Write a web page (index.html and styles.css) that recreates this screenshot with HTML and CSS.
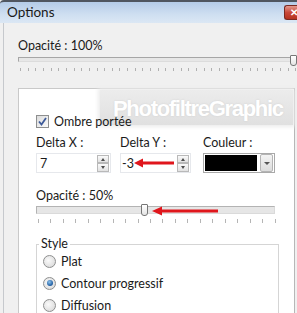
FILE: index.html
```html
<!DOCTYPE html>
<html lang="fr">

<head>
    <meta charset="UTF-8">
    <title>Options</title>
    <link rel="stylesheet" href="styles.css">
</head>

<body>
    <div class="window">
        <div class="titlebar">
            <span class="title">Options</span>
            <span class="close">&#x2715;</span>
        </div>

        <div class="frame">
            <div class="content">
                <div class="label">Opacité : 100%</div>
                <div class="slider slider-top">
                    <div class="track"></div>
                    <div class="thumb" style="left: 272px"></div>
                </div>
                <div class="ticks ticks-top"></div>

                <div class="panel">
                    <div class="watermark">PhotofiltreGraphic</div>

                    <div class="check-row">
                        <span class="checkbox">
                            <svg width="9" height="9" viewBox="0 0 9 9">
                                <path d="M1 4.5 L3.5 7.5 L8 1" fill="none" stroke="#3d5a99" stroke-width="1.8" />
                            </svg>
                        </span>
                        <span>Ombre portée</span>
                    </div>

                    <div class="fields">
                        <div class="field">
                            <div class="label">Delta X :</div>
                            <div class="spin-input">
                                <span class="value">7</span>
                                <span class="spin"><span class="up"></span><span class="down"></span></span>
                            </div>
                        </div>
                        <div class="field">
                            <div class="label">Delta Y :</div>
                            <div class="spin-input narrow">
                                <span class="value">-3</span>
                                <span class="spin"><span class="up"></span><span class="down"></span></span>
                            </div>
                            <svg class="arrow arrow-y" width="40" height="10" viewBox="0 0 40 10">
                                <path d="M0 5 L9 0.5 L9 9.5 Z" fill="#e0161c" />
                                <rect x="8" y="3.5" width="32" height="3" fill="#e0161c" />
                            </svg>
                        </div>
                        <div class="field">
                            <div class="label">Couleur :</div>
                            <div class="combo">
                                <span class="swatch"></span>
                                <span class="drop"></span>
                            </div>
                        </div>
                    </div>

                    <div class="label opacity-label">Opacité : 50%</div>
                    <div class="slider slider-inner">
                        <div class="track"></div>
                        <div class="thumb" style="left: 105px"></div>
                        <svg class="arrow arrow-slider" width="66" height="10" viewBox="0 0 66 10">
                            <path d="M0 5 L10 0.5 L10 9.5 Z" fill="#e0161c" />
                            <rect x="9" y="3.5" width="57" height="3" fill="#e0161c" />
                        </svg>
                    </div>
                    <div class="ticks ticks-inner"></div>

                    <fieldset class="group">
                        <legend>Style</legend>
                        <div class="radio-row"><span class="radio"></span>Plat</div>
                        <div class="radio-row"><span class="radio checked"></span>Contour progressif</div>
                        <div class="radio-row"><span class="radio"></span>Diffusion</div>
                    </fieldset>
                </div>
            </div>
        </div>
    </div>
</body>

</html>
```

FILE: styles.css
```css
* {
    box-sizing: border-box;
    margin: 0;
    padding: 0;
}

body {
    width: 297px;
    height: 313px;
    overflow: hidden;
    background-color: #f0f0f0;
    font-family: Lato, 'Noto Sans', sans-serif;
    font-size: 12.5px;
    color: #1a1a1a;
}

.window {
    height: 313px;
    display: flex;
    flex-direction: column;
}

.titlebar {
    height: 23px;
    flex-shrink: 0;
    display: flex;
    justify-content: space-between;
    align-items: flex-start;
    border-top: 2px solid #4f5660;
    border-top-left-radius: 4px;
    background: linear-gradient(to bottom, #b4cce8, #cfdff1 60%, #dbe7f4);
}

.title {
    font-size: 13.5px;
    line-height: 20px;
    padding-left: 7px;
}

.close {
    width: 13px;
    height: 15px;
    margin-top: 3px;
    background: linear-gradient(to bottom, #e39a8e, #c9493a 50%, #b5321f);
    border: 1px solid #7a2a22;
    border-right: none;
    border-radius: 3px 0 0 3px;
    color: #fff;
    font-size: 10px;
    font-weight: bold;
    line-height: 13px;
    padding-left: 5px;
    overflow: hidden;
}

.frame {
    flex: 1;
    margin-left: 3px;
    border-left: 1px solid #c6c9cd;
    overflow: hidden;
}

.content {
    padding: 15px 2px 0 14px;
}

.label {
    line-height: 16px;
    white-space: nowrap;
}

/* sliders */
.slider {
    position: relative;
    margin-top: 3px;
}

.slider-top .track {
    height: 5px;
    background: #e7e7e7;
    border: 1px solid #a6a6a6;
    border-right-color: #dcdcdc;
    border-bottom-color: #dcdcdc;
}

.slider-inner .track {
    height: 8px;
    background: #e6e6e6;
    border: 1px solid #b3b3b3;
    border-right-color: #dadada;
    border-bottom-color: #dadada;
}

.thumb {
    position: absolute;
    top: -2px;
    width: 7px;
    height: 11px;
    border: 1px solid #767676;
    border-radius: 1px 1px 3px 3px;
    background: linear-gradient(to bottom, #ffffff, #e4e4e4);
}

.slider-inner .thumb {
    top: -2px;
    height: 12px;
}

.ticks {
    height: 3px;
}

.ticks-top {
    margin: 6px 0 0 2px;
    width: 276px;
    background: repeating-linear-gradient(to right, #b0b0b0 0, #b0b0b0 1px, transparent 1px, transparent 7.65px);
}

.ticks-inner {
    margin: 5px 0 0 2px;
    width: 238px;
    height: 4px;
    background: repeating-linear-gradient(to right, #b5b5b5 0, #b5b5b5 1px, transparent 1px, transparent 12.45px);
}

.arrow {
    position: absolute;
}

.arrow-slider {
    left: 116px;
    top: 0;
}

.arrow-y {
    left: 14px;
    top: 23px;
}

/* panel */
.panel {
    position: relative;
    margin-top: 17px;
    height: 240px;
    background: #fff;
    border: 1px solid #c9c9c9;
    border-right-color: #b7b7b7;
    padding: 26px 14px 0 17px;
}

.watermark {
    position: absolute;
    left: 81px;
    top: 1px;
    width: 193px;
    height: 35px;
    background: linear-gradient(to bottom, #ececec, #e0e0e0);
    box-shadow: 0 0 4px 2px #ececec;
    color: #fff;
    font-family: 'Liberation Sans', sans-serif;
    font-weight: bold;
    font-size: 22px;
    letter-spacing: -1.3px;
    line-height: 37px;
    padding-left: 13px;
    text-shadow: 0 0 2px #cfcfcf;
}

.check-row {
    position: relative;
    display: flex;
    align-items: center;
    gap: 5px;
    height: 13px;
}

.checkbox {
    width: 13px;
    height: 13px;
    border: 1px solid #8e8f8f;
    background: linear-gradient(135deg, #dcdcdc, #fafafa);
    display: flex;
    align-items: center;
    justify-content: center;
}

.fields {
    position: relative;
    display: grid;
    grid-template-columns: 84px 83px 80px;
    margin-top: 7px;
}

.field {
    position: relative;
}

.spin-input {
    margin-top: 2px;
    width: 75px;
    height: 20px;
    border: 1px solid #e6e8ec;
    display: flex;
    justify-content: space-between;
    align-items: center;
    padding: 0 1px 0 3px;
}

.spin-input.narrow {
    width: 71px;
    padding-left: 1px;
}

.spin {
    display: flex;
    flex-direction: column;
    width: 12px;
    height: 17px;
}

.spin span {
    flex: 1;
    border: 1px solid #b9b9b9;
    background: linear-gradient(to bottom, #fafafa, #e2e2e2);
    position: relative;
}

.spin .up::after,
.spin .down::after {
    content: '';
    position: absolute;
    left: 3px;
    border-left: 2.5px solid transparent;
    border-right: 2.5px solid transparent;
}

.spin .up::after {
    top: 2px;
    border-bottom: 3px solid #4d4d4d;
}

.spin .down::after {
    top: 2px;
    border-top: 3px solid #4d4d4d;
}

.combo {
    margin-top: 2px;
    width: 72px;
    height: 20px;
    border: 1px solid #a9a9a9;
    display: flex;
    align-items: center;
    padding: 1px;
    gap: 3px;
}

.swatch {
    width: 52px;
    height: 16px;
    background: #000;
}

.drop {
    width: 13px;
    height: 18px;
    border: 1px solid #b4b4b4;
    border-radius: 2px;
    background: linear-gradient(to bottom, #f4f4f4, #dcdcdc);
    position: relative;
}

.drop::after {
    content: '';
    position: absolute;
    left: 3px;
    top: 7px;
    border-left: 3px solid transparent;
    border-right: 3px solid transparent;
    border-top: 3px solid #555;
}

.opacity-label {
    margin-top: 15px;
}

.slider-inner {
    margin-top: 2px;
    width: 239px;
}

/* group */
.group {
    margin-top: 15px;
    width: 243px;
    height: 100px;
    border: 1px solid #d5d5d5;
    padding: 0 6px;
}

.group legend {
    margin-left: -4px;
    padding: 0 2px;
    line-height: 12px;
}

.radio-row {
    display: flex;
    align-items: center;
    gap: 5px;
    height: 22px;
}

.radio {
    width: 13px;
    height: 13px;
    border-radius: 50%;
    border: 1px solid #8e8f8f;
    background: radial-gradient(circle at 40% 40%, #fafafa, #d4d4d4);
    position: relative;
}

.radio.checked::after {
    content: '';
    position: absolute;
    left: 2.5px;
    top: 2.5px;
    width: 6px;
    height: 6px;
    border-radius: 50%;
    background: radial-gradient(circle at 40% 35%, #8ec4ee, #1d5a9e 70%);
}
```
